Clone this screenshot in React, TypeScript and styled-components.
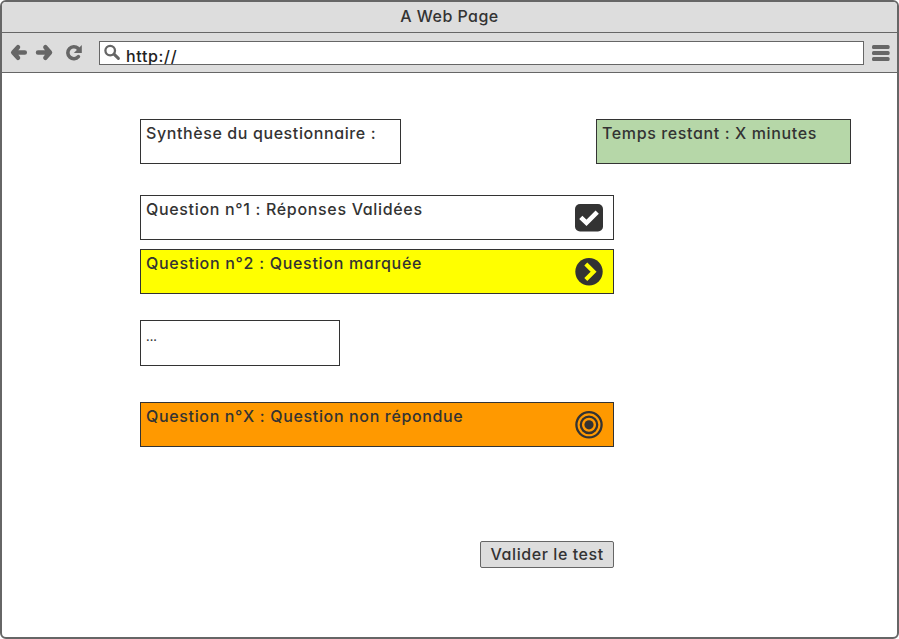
import React from "react";
import styled, { createGlobalStyle } from "styled-components";

const GlobalStyle = createGlobalStyle`
  * { box-sizing: border-box; }
  body { margin: 0; background: #fff; }
`;

const Window = styled.div`
  width: 899px;
  height: 639px;
  border: 2px solid #666;
  border-radius: 6px;
  overflow: hidden;
  background: #fff;
  color: #333;
  font: 500 16px/20px Inter, "Liberation Sans", sans-serif;
  font-feature-settings: "cv11" 1, "ss03" 0, "calt" 0;
`;

const Label = styled.span<{ $spacing?: number }>`
  letter-spacing: ${(p) => p.$spacing ?? 0}px;
  white-space: pre;
`;

const TitleBar = styled.header`
  height: 31px;
  padding-top: 4px;
  border-bottom: 1px solid #666;
  background: #ddd;
  text-align: center;
`;

const Toolbar = styled.div`
  height: 40px;
  display: flex;
  align-items: flex-start;
  padding: 8px 7px 0 8px;
  border-bottom: 1px solid #666;
  background: #ddd;
`;

const NavIcons = styled.svg`
  width: 89px;
  height: 24px;
  flex: none;
`;

const AddressBar = styled.div`
  width: 765px;
  height: 24px;
  display: flex;
  padding-left: 4px;
  border: 1px solid #666;
  background: #fff;
  color: #222;
`;

const SearchIcon = styled.svg`
  width: 18px;
  height: 20px;
  margin-right: 4px;
`;

const Address = styled.div`
  padding-top: 4px;
`;

const MenuIcon = styled.svg`
  width: 18px;
  height: 24px;
  margin-left: 8px;
`;

const Content = styled.main`
  display: flex;
  flex-direction: column;
  align-items: flex-start;
  padding: 46px 46px 0 138px;
`;

const Heading = styled.div`
  width: 711px;
  display: flex;
  justify-content: space-between;
  margin-bottom: 31px;
`;

const Box = styled.div<{ $width: number; $fill?: string; $gap?: number; $height?: number }>`
  width: ${(p) => p.$width}px;
  height: ${(p) => p.$height ?? 45}px;
  display: flex;
  justify-content: space-between;
  margin-bottom: ${(p) => p.$gap ?? 0}px;
  padding: 3px 10px 0 5px;
  border: 1px solid #333;
  background: ${(p) => p.$fill ?? "#fff"};
`;

const StatusIcon = styled.svg`
  width: 28px;
  height: 28px;
  margin-top: 5px;
`;

const Dots = styled.span`
  padding-top: 4px;
  font-size: 12px;
  line-height: 18px;
`;

const SubmitButton = styled.button`
  width: 134px;
  height: 27px;
  margin-left: 340px;
  padding: 0 0 2px 9.5px;
  border: 1px solid #666;
  border-radius: 2px;
  background: #ddd;
  color: #333;
  font: inherit;
  font-feature-settings: inherit;
  line-height: 20px;
  text-align: left;
`;

export default function App() {
  return (
    <>
      <GlobalStyle />
      <Window>
        <TitleBar><Label $spacing={0.45}>A Web Page</Label></TitleBar>
        <Toolbar>
          <NavIcons viewBox="0 0 89 24" fill="none" stroke="#666">
            <path d="M8 6.2L3.2 11.5L8 16.8M4 11.5H14.8" strokeWidth="4.5" strokeLinecap="round" strokeLinejoin="round" />
            <path d="M35.4 6.2L40 11.5L35.4 16.8M39 11.5H28" strokeWidth="4.5" strokeLinecap="round" strokeLinejoin="round" />
            <path d="M68.4 15.6A6 6 0 1 1 68 7.4" strokeWidth="3.6" strokeLinecap="round" />
            <path d="M71.8 4V12H63.8Z" fill="#666" stroke="none" />
          </NavIcons>
          <AddressBar>
            <SearchIcon viewBox="0 0 18 20" fill="none" stroke="#666">
              <circle cx="6.2" cy="8.6" r="4.8" strokeWidth="2.3" />
              <path d="M10 12.2L14.4 16.4" strokeWidth="3" strokeLinecap="round" />
            </SearchIcon>
            <Address><Label $spacing={0.65}>http://</Label></Address>
          </AddressBar>
          <MenuIcon viewBox="0 0 18 24" fill="#666">
            <rect y="4" width="17.6" height="4" rx="1.5" />
            <rect y="10" width="17.6" height="4" rx="1.5" />
            <rect y="16" width="17.6" height="4" rx="1.5" />
          </MenuIcon>
        </Toolbar>
        <Content>
          <Heading>
            <Box $width={261}><Label $spacing={0.6}>Synthèse du questionnaire :</Label></Box>
            <Box $width={255} $fill="#b6d7a8"><Label $spacing={0.62}>Temps restant : X minutes</Label></Box>
          </Heading>
          <Box $width={474} $gap={9}>
            <Label $spacing={0.67}>Question n°1 : Réponses Validées</Label>
            <StatusIcon viewBox="0 0 28 28">
              <rect width="28" height="27.5" rx="5" fill="#333" />
              <path d="M5.8 13.3L11.5 18.8L22.2 8.2" fill="none" stroke="#fff" strokeWidth="4.6" />
            </StatusIcon>
          </Box>
          <Box $width={474} $fill="#ffff00" $gap={26}>
            <Label $spacing={0.7}>Question n°2 : Question marquée</Label>
            <StatusIcon viewBox="0 0 28 28">
              <circle cx="14" cy="13.8" r="13.7" fill="#333" />
              <path d="M10.8 6L18.6 13.8L10.8 21.6" fill="none" stroke="#ff0" strokeWidth="4.2" />
            </StatusIcon>
          </Box>
          <Box $width={200} $height={46} $gap={36}><Dots>...</Dots></Box>
          <Box $width={474} $fill="#ff9900" $gap={94}>
            <Label $spacing={0.65}>Question n°X : Question non répondue</Label>
            <StatusIcon viewBox="0 0 28 28" fill="none" stroke="#333" strokeWidth="2.3">
              <circle cx="14" cy="13.8" r="12.6" />
              <circle cx="14" cy="13.8" r="8.2" />
              <circle cx="14" cy="13.8" r="4.6" fill="#333" stroke="none" />
            </StatusIcon>
          </Box>
          <SubmitButton><Label $spacing={0.58}>Valider le test</Label></SubmitButton>
        </Content>
      </Window>
    </>
  );
}
